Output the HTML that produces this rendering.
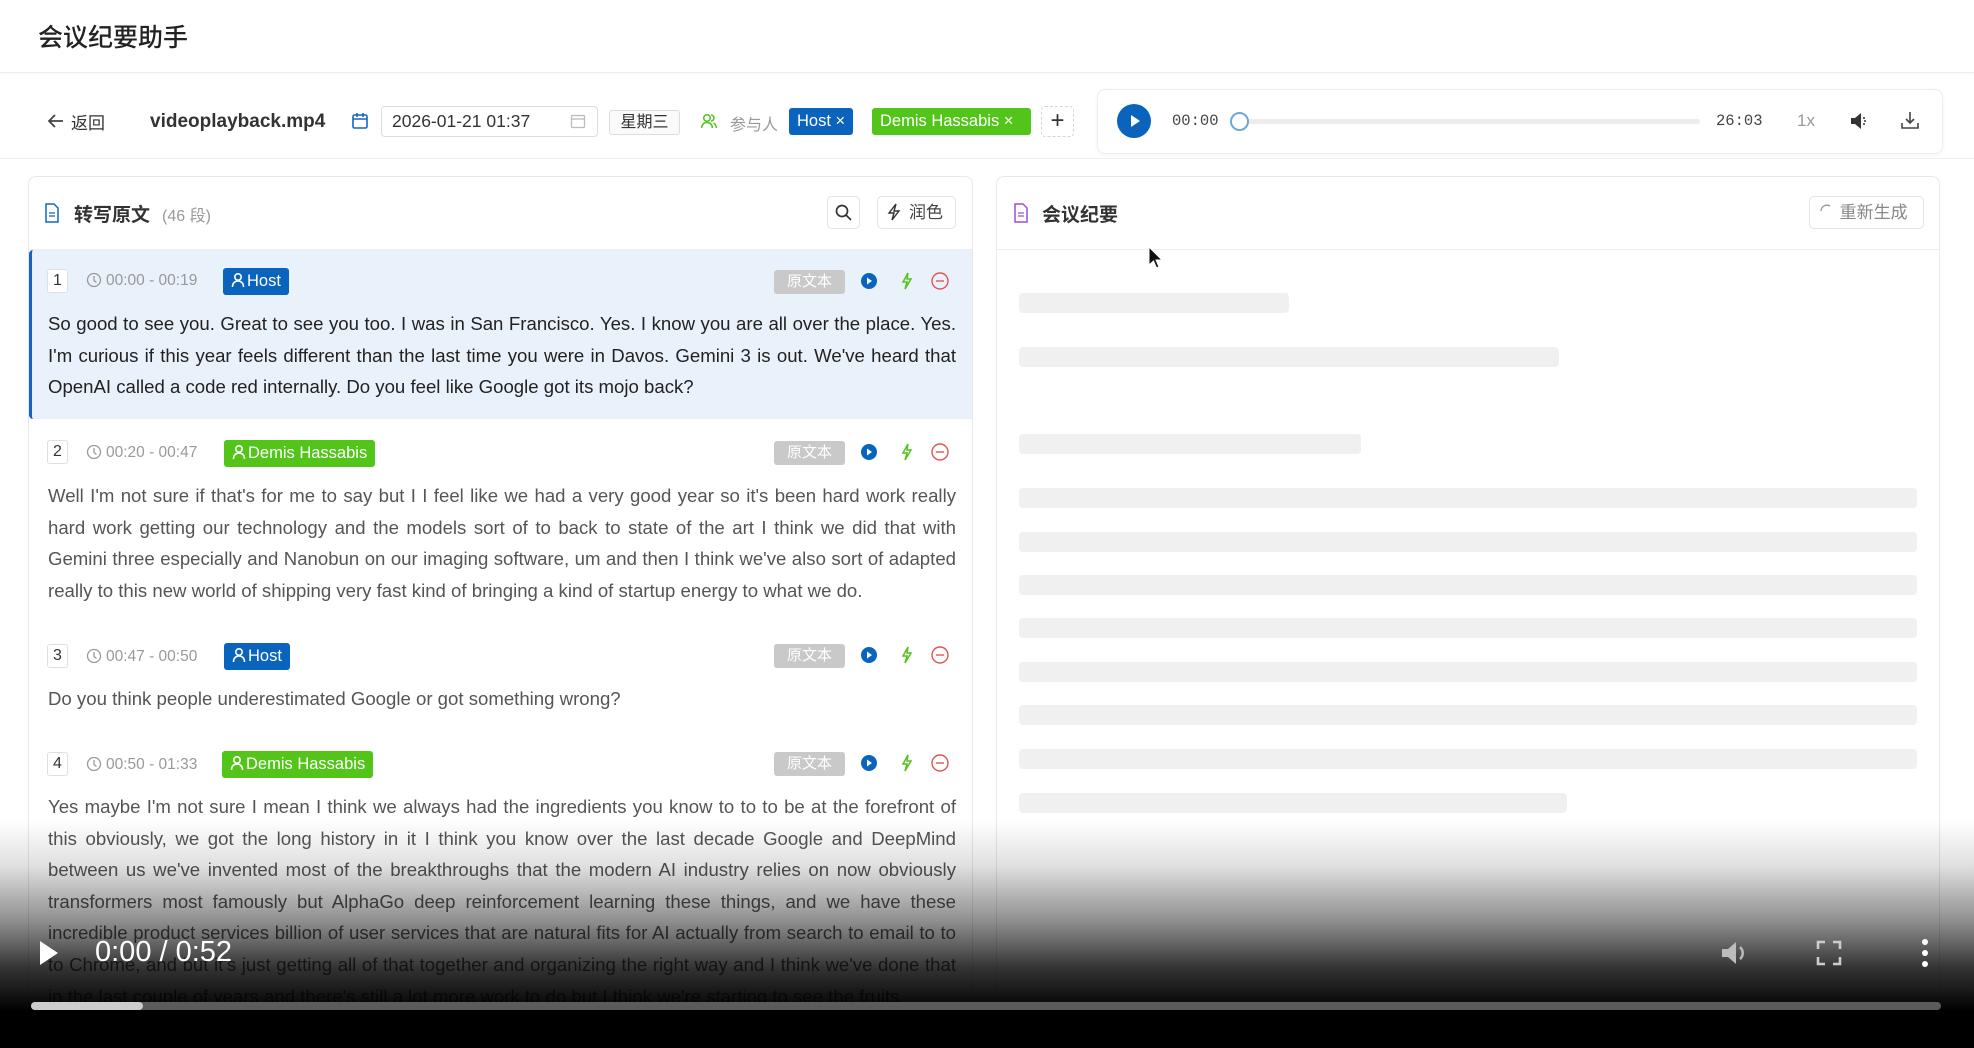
<!DOCTYPE html>
<html><head><meta charset="utf-8"><style>
*{box-sizing:border-box;margin:0;padding:0}
html,body{width:1974px;height:1048px;overflow:hidden}
body{background:#fff;font-family:"Liberation Sans","Noto Sans CJK SC",sans-serif;position:relative;color:#222}
.a{position:absolute}
.hdr{left:0;top:0;width:1974px;height:73px;border-bottom:1px solid #ececec;box-shadow:0 1px 3px rgba(0,0,0,.04)}
.tb{left:0;top:74px;width:1974px;height:85px;border-bottom:1px solid #eee}
.tag{color:#fff;font-size:16.5px;border-radius:3px;height:27px;line-height:27px;padding:0 8px;white-space:nowrap}
.tag svg{vertical-align:-2px;margin-right:2px}
.panel{border:1px solid #e8e8e8;border-radius:8px;background:#fff;overflow:hidden}
.btn{border:1px solid #e3e3e3;border-radius:5px;background:#fff;text-align:center;font-size:17px;color:#444}
.num{width:21px;height:24px;border:1px solid #e0e0e0;border-radius:3px;background:#fff;font-size:16px;text-align:center;line-height:22px;color:#333}
.tm{font-size:15.5px;color:#999;white-space:nowrap}
.tm svg{vertical-align:-3px;margin-right:4px}
.yw{width:71px;height:24px;background:#c9c9c9;color:#fff;border-radius:3px;font-size:15px;text-align:center;line-height:24px}
.txt{left:48px;width:908px;font-size:18.6px;line-height:31.6px;text-align:justify;color:#555}
.sk{left:1019px;height:20px;background:#f0f0f0;border-radius:4px}
</style></head><body>
<svg width="0" height="0" style="position:absolute"><defs>
<g id="pp"><circle cx="7" cy="5" r="3.2" stroke="#fff" stroke-width="1.6" fill="none"/><path d="M1.5 15c0-4 2.5-6 5.5-6s5.5 2 5.5 6" stroke="#fff" stroke-width="1.6" fill="none"/></g>
<g id="ck"><circle cx="8" cy="8" r="6.5" stroke="#999" stroke-width="1.3" fill="none"/><path d="M8 4v4.5l2.5 2" stroke="#999" stroke-width="1.3" fill="none"/></g>
</defs></svg>
<div class="a hdr"></div>
<div class="a" style="left:38px;top:18px;font-size:25px;color:#222;font-weight:500">会议纪要助手</div>
<div class="a tb"></div>
<svg class="a" style="left:47px;top:112px" width="18" height="18" viewBox="0 0 18 18"><path d="M16 9H3M8 3L2 9l6 6" stroke="#444" stroke-width="1.8" fill="none"/></svg>
<div class="a" style="left:71px;top:109px;font-size:17px;color:#333">返回</div>
<div class="a" style="left:150px;top:111px;font-size:19px;font-weight:bold;color:#333">videoplayback.mp4</div>
<svg class="a" style="left:351px;top:112px" width="18" height="18" viewBox="0 0 18 18"><rect x="2" y="3" width="14" height="13" rx="1.5" stroke="#1565c0" stroke-width="1.6" fill="none"/><path d="M2 7h14M6 1v4M12 1v4" stroke="#1565c0" stroke-width="1.6"/></svg>
<div class="a" style="left:381px;top:106px;width:217px;height:31px;border:1px solid #ddd;border-radius:4px"></div>
<div class="a" style="left:392px;top:111px;font-size:17.5px;color:#333">2026-01-21 01:37</div>
<svg class="a" style="left:570px;top:113px" width="16" height="16" viewBox="0 0 16 16"><rect x="1.5" y="2.5" width="13" height="12" rx="1" stroke="#bbb" stroke-width="1.3" fill="none"/><path d="M1.5 6h13" stroke="#bbb" stroke-width="1.3"/></svg>
<div class="a" style="left:609px;top:110px;width:71px;height:25px;border:1px solid #ddd;border-radius:3px;background:#fafafa;font-size:16px;text-align:center;line-height:23px;color:#333">星期三</div>
<svg class="a" style="left:700px;top:112px" width="18" height="18" viewBox="0 0 18 18"><circle cx="7" cy="6" r="3.3" stroke="#52c41a" stroke-width="1.5" fill="none"/><path d="M1.5 16c.5-3.5 2.5-5.5 5.5-5.5s5 2 5.5 5.5M11 3a3 3 0 0 1 0 6M13.5 11c1.6.8 2.6 2.5 3 5" stroke="#52c41a" stroke-width="1.5" fill="none"/></svg>
<div class="a" style="left:730px;top:111px;font-size:16px;color:#999">参与人</div>
<div class="a tag" style="left:789px;top:108px;background:#0a64bd">Host ×</div>
<div class="a tag" style="left:872px;top:108px;width:159px;background:#52c41a">Demis Hassabis ×</div>
<div class="a" style="left:1041px;top:106px;width:33px;height:31px;border:1px dashed #d6d6d6;border-radius:4px;font-size:24px;text-align:center;line-height:28px;color:#333">+</div>
<div class="a" style="left:1097px;top:89px;width:846px;height:65px;border:1px solid #eee;border-radius:8px;box-shadow:0 1px 4px rgba(0,0,0,.05);background:#fff"></div>
<div class="a" style="left:1117px;top:104px;width:34px;height:34px;border-radius:50%;background:#0a64bd"></div>
<svg class="a" style="left:1117px;top:104px" width="34" height="34"><path d="M14 11v12l9-6z" fill="#fff"/></svg>
<div class="a" style="left:1172px;top:112px;font-family:'Liberation Mono',monospace;font-size:15.5px;color:#444">00:00</div>
<div class="a" style="left:1240px;top:119px;width:460px;height:5px;border-radius:3px;background:#ececec"></div>
<div class="a" style="left:1230px;top:112px;width:19px;height:19px;border-radius:50%;border:2.5px solid #6ba7d8;background:#fff"></div>
<div class="a" style="left:1716px;top:112px;font-family:'Liberation Mono',monospace;font-size:15.5px;color:#444">26:03</div>
<div class="a" style="left:1797px;top:111px;font-size:17px;color:#999">1x</div>
<svg class="a" style="left:1849px;top:110px" width="22" height="22" viewBox="0 0 22 22"><path d="M2 8h4l6-5v16l-6-5H2z" fill="#333"/><path d="M15 8v0M16 11h0M15 14h0" stroke="#333" stroke-width="2" stroke-linecap="round"/></svg>
<svg class="a" style="left:1900px;top:110px" width="20" height="20" viewBox="0 0 20 20"><path d="M10 2v11M6 9l4 4 4-4M2 13v5h16v-5" stroke="#444" stroke-width="1.6" fill="none"/></svg>

<div class="a panel" style="left:28px;top:176px;width:945px;height:872px;border-bottom:none;border-radius:8px 8px 0 0"></div>
<div class="a" style="left:29px;top:249px;width:943px;height:1px;background:#eee"></div>
<svg class="a" style="left:44px;top:203px" width="16" height="20" viewBox="0 0 16 20"><path d="M2 1h8l4 4v14H2z" stroke="#1565c0" stroke-width="1.5" fill="none"/><path d="M5 10h6M5 13h6" stroke="#1565c0" stroke-width="1.3"/></svg>
<div class="a" style="left:74px;top:200px;font-size:19px;font-weight:bold;color:#333">转写原文</div>
<div class="a" style="left:162px;top:202px;font-size:16px;color:#999">(46 段)</div>
<div class="a btn" style="left:827px;top:196px;width:33px;height:33px"></div>
<svg class="a" style="left:834px;top:203px" width="19" height="19" viewBox="0 0 19 19"><circle cx="8" cy="8" r="5.5" stroke="#333" stroke-width="1.7" fill="none"/><path d="M12 12l5 5" stroke="#333" stroke-width="1.7"/></svg>
<div class="a btn" style="left:877px;top:196px;width:79px;height:33px;line-height:31px">&nbsp;&nbsp;&nbsp;&nbsp;润色</div>
<svg class="a" style="left:886px;top:203px" width="16" height="18" viewBox="0 0 16 18"><path d="M10 1L3 10h5l-2 7 7-9H8z" stroke="#333" stroke-width="1.4" fill="none"/></svg>

<div class="a" style="left:29px;top:250px;width:943px;height:169px;background:#e9f1fb;border-left:3px solid #1565c0;border-radius:4px 0 0 4px"></div>

<div class="a num" style="left:47px;top:269px">1</div>
<div class="a tm" style="left:86px;top:272px"><svg width="16" height="16"><use href="#ck"/></svg>00:00 - 00:19</div>
<div class="a tag" style="left:223px;top:268px;background:#0a64bd"><svg width="14" height="16"><use href="#pp"/></svg>Host</div>
<div class="a txt" style="top:308px;color:#222">So good to see you. Great to see you too. I was in San Francisco. Yes. I know you are all over the place. Yes. I'm curious if this year feels different than the last time you were in Davos. Gemini 3 is out. We've heard that OpenAI called a code red internally. Do you feel like Google got its mojo back?</div>

<div class="a num" style="left:47px;top:440px">2</div>
<div class="a tm" style="left:86px;top:444px"><svg width="16" height="16"><use href="#ck"/></svg>00:20 - 00:47</div>
<div class="a tag" style="left:224px;top:440px;background:#52c41a"><svg width="14" height="16"><use href="#pp"/></svg>Demis Hassabis</div>
<div class="a txt" style="top:480px">Well I'm not sure if that's for me to say but I I feel like we had a very good year so it's been hard work really hard work getting our technology and the models sort of to back to state of the art I think we did that with Gemini three especially and Nanobun on our imaging software, um and then I think we've also sort of adapted really to this new world of shipping very fast kind of bringing a kind of startup energy to what we do.</div>

<div class="a num" style="left:47px;top:644px">3</div>
<div class="a tm" style="left:86px;top:648px"><svg width="16" height="16"><use href="#ck"/></svg>00:47 - 00:50</div>
<div class="a tag" style="left:224px;top:643px;background:#0a64bd"><svg width="14" height="16"><use href="#pp"/></svg>Host</div>
<div class="a txt" style="top:683px">Do you think people underestimated Google or got something wrong?</div>

<div class="a num" style="left:47px;top:752px">4</div>
<div class="a tm" style="left:86px;top:756px"><svg width="16" height="16"><use href="#ck"/></svg>00:50 - 01:33</div>
<div class="a tag" style="left:222px;top:751px;background:#52c41a"><svg width="14" height="16"><use href="#pp"/></svg>Demis Hassabis</div>
<div class="a txt" style="top:791px">Yes maybe I'm not sure I mean I think we always had the ingredients you know to to to be at the forefront of this obviously, we got the long history in it I think you know over the last decade Google and DeepMind between us we've invented most of the breakthroughs that the modern AI industry relies on now obviously transformers most famously but AlphaGo deep reinforcement learning these things, and we have these incredible product services billion of user services that are natural fits for AI actually from search to email to to to Chrome, and but it's just getting all of that together and organizing the right way and I think we've done that in the last couple of years and there's still a lot more work to do but I think we're starting to see the fruits</div>

<div class="a yw" style="left:774px;top:270px">原文本</div>
<div class="a yw" style="left:774px;top:441px">原文本</div>
<div class="a yw" style="left:774px;top:644px">原文本</div>
<div class="a yw" style="left:774px;top:752px">原文本</div>
<svg class="a" style="left:858px;top:268px" width="100" height="520">
<defs><g id="ic"><circle cx="11" cy="13" r="8" fill="#0a64bd"/><path d="M9 9.5v7l5-3.5z" fill="#fff"/><path d="M50 5l-5 9h4l-2 7 6-10h-4z" stroke="#52c41a" stroke-width="1.5" fill="none"/><circle cx="82" cy="13" r="8" stroke="#e05555" stroke-width="1.4" fill="none"/><path d="M78 13h8" stroke="#e05555" stroke-width="1.4"/></g></defs>
<use href="#ic" y="0"/><use href="#ic" y="171"/><use href="#ic" y="374"/><use href="#ic" y="482"/>
</svg>

<div class="a panel" style="left:996px;top:176px;width:944px;height:872px;border-bottom:none;border-radius:8px 8px 0 0"></div>
<div class="a" style="left:997px;top:249px;width:942px;height:1px;background:#eee"></div>
<svg class="a" style="left:1013px;top:203px" width="16" height="20" viewBox="0 0 16 20"><path d="M2 1h8l4 4v14H2z" stroke="#9c4fd6" stroke-width="1.5" fill="none"/><path d="M5 10h6M5 13h6" stroke="#9c4fd6" stroke-width="1.3"/></svg>
<div class="a" style="left:1042px;top:200px;font-size:19px;font-weight:bold;color:#333">会议纪要</div>
<div class="a btn" style="left:1809px;top:196px;width:115px;height:33px;line-height:31px;color:#888">&nbsp;&nbsp;&nbsp;重新生成</div>
<svg class="a" style="left:1819px;top:203px" width="14" height="14"><path d="M2 8a6 6 0 0 1 9-5" stroke="#999" stroke-width="1.4" fill="none"/></svg>
<div class="a sk" style="top:293px;width:270px"></div>
<div class="a sk" style="top:347px;width:540px"></div>
<div class="a sk" style="top:434px;width:342px"></div>
<div class="a sk" style="top:488px;width:898px"></div>
<div class="a sk" style="top:532px;width:898px"></div>
<div class="a sk" style="top:575px;width:898px"></div>
<div class="a sk" style="top:618px;width:898px"></div>
<div class="a sk" style="top:662px;width:898px"></div>
<div class="a sk" style="top:705px;width:898px"></div>
<div class="a sk" style="top:749px;width:898px"></div>
<div class="a sk" style="top:793px;width:548px"></div>
<svg class="a" style="left:1148px;top:246px" width="16" height="24"><path d="M1 1v18l4.5-4 3 7 2.5-1-3-7h6z" fill="#111" stroke="#fff" stroke-width="1"/></svg>

<div class="a" style="left:0;top:820px;width:1974px;height:228px;background:linear-gradient(to bottom,rgba(0,0,0,0) 0%,rgba(0,0,0,.12) 20%,rgba(0,0,0,.45) 45%,rgba(0,0,0,.8) 65%,#000 84%,#000 100%)"></div>
<svg class="a" style="left:38px;top:940px" width="22" height="26"><path d="M2 1v24l18-12z" fill="#fff"/></svg>
<div class="a" style="left:95px;top:936px;font-size:29px;color:#fff">0:00 / 0:52</div>
<svg class="a" style="left:1718px;top:937px" width="32" height="32" viewBox="0 0 32 32"><path d="M4 12h6l8-7v22l-8-7H4z" fill="#bbb"/><path d="M22 10a8 8 0 0 1 0 12" stroke="#bbb" stroke-width="2.5" fill="none"/></svg>
<svg class="a" style="left:1816px;top:940px" width="26" height="26" viewBox="0 0 26 26"><path d="M2 9V2h7M17 2h7v7M24 17v7h-7M9 24H2v-7" stroke="#ccc" stroke-width="2.6" fill="none"/></svg>
<svg class="a" style="left:1918px;top:937px" width="14" height="32"><circle cx="7" cy="5" r="3" fill="#fff"/><circle cx="7" cy="16" r="3" fill="#fff"/><circle cx="7" cy="27" r="3" fill="#fff"/></svg>
<div class="a" style="left:31px;top:1002px;width:1910px;height:8px;border-radius:4px;background:rgba(120,120,120,.75)"></div>
<div class="a" style="left:31px;top:1002px;width:112px;height:8px;border-radius:4px;background:#ccc"></div>
</body></html>
